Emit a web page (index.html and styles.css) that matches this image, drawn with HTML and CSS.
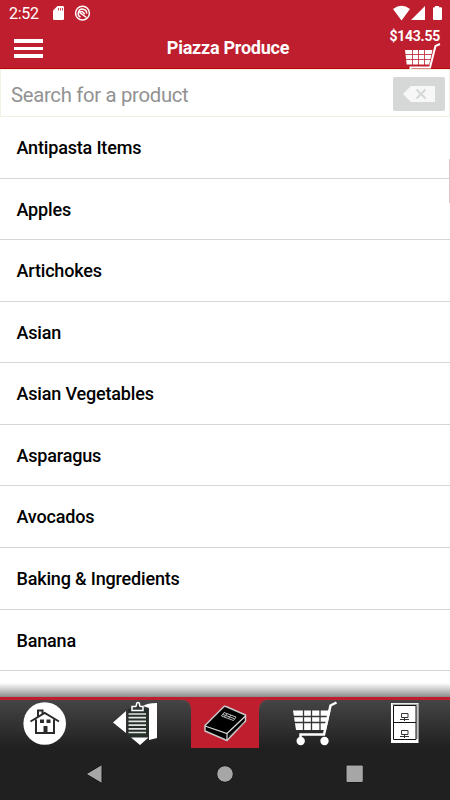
FILE: index.html
```html
<!DOCTYPE html>
<html lang="en">
<head>
<meta charset="utf-8">
<title>Piazza Produce</title>
<link rel="stylesheet" href="styles.css">
</head>
<body>
<div class="app">
  <header class="header">
    <div class="status">
      <span class="clock">2:52</span>
      <svg class="status-left" width="40" height="27" viewBox="52 0 40 27">
        <path fill="#fff" d="M57.500 6h5.200q1.300 0 1.300 1.300v11.400q0 1.300-1.300 1.300h-8.400q-1.300 0-1.300-1.300V10.500z"/>
        <path stroke="#be1e2d" stroke-width=".8" d="M58.500 8v2.500M60.500 8v2.500M62.500 8v2.500"/>
        <circle cx="82.500" cy="13.200" r="6.900" fill="none" stroke="#fff" stroke-width="1.500"/>
        <path fill="none" stroke="#fff" stroke-width="1.500" d="M80.500 17a4.200 4.200 0 1 1 6.200-3.500M79.500 12.500l7 5M79.500 12l2.800-.5 2.500 2.800"/>
      </svg>
      <svg class="status-right" width="60" height="27" viewBox="390 0 60 27">
        <path fill="#fff" d="M393 9q8.500-6.500 17 0l-8.500 11.500zM425 6v14h-14zM435 7.300V6h4v1.300h2q1 0 1 1V19q0 1-1 1h-7q-1 0-1-1V8.300q0-1 1-1z"/>
      </svg>
    </div>
    <div class="titlebar">
      <div class="menu"><i></i><i></i><i></i></div>
      <h1>Piazza Produce</h1>
      <div class="cart">
        <span>$143.55</span>
        <svg width="40" height="27" viewBox="402 42 40 27">
          <path fill="#fff" d="M405 50h27.500l-3.300 14.500h-22.500z"/>
          <path fill="none" stroke="#be1e2d" stroke-width=".8" d="M405 54.500h28M405 59.500h27M412.500 49v16M418.500 49v16M424.500 49v16"/>
          <path fill="none" stroke="#fff" stroke-width="2" d="M440 44l-4.500 2-5.500 21.500h-19.500v2"/>
        </svg>
      </div>
    </div>
  </header>
  <div class="search">
    <span>Search for a product</span>
    <button class="clear" aria-label="Clear"><svg width="32" height="16" viewBox="0 0 32 16"><path fill="#f7f7f7" d="M0 8l8-8h24v16H8z"/><path stroke="#d5d8d7" stroke-width="2" d="M13.500 3.500l9 9M22.500 3.500l-9 9"/></svg></button>
  </div>
  <main class="list">
    <div class="row">Antipasta Items</div>
    <div class="row">Apples</div>
    <div class="row">Artichokes</div>
    <div class="row">Asian</div>
    <div class="row">Asian Vegetables</div>
    <div class="row">Asparagus</div>
    <div class="row">Avocados</div>
    <div class="row">Baking &amp; Ingredients</div>
    <div class="row">Banana</div>
    <div class="scrollbar"></div>
    <div class="shade"></div>
  </main>
  <nav class="tabs">
    <svg viewBox="0 700 90 48">
      <circle cx="44.700" cy="723.500" r="21.300" fill="#fff"/>
      <path fill="none" stroke="#2b2b2b" stroke-width="2" d="M30.500 721.500L44.700 713l14.300 8.500M38 716.500V710.500h4.500v4M36 719.500V733h18V719.500"/>
      <path fill="#2b2b2b" d="M40 719.500h4v3.500h-4zM46.500 719.500h4v3.500h-4zM43.500 726h4v7h-4z"/>
    </svg>
    <svg viewBox="90 700 90 48">
      <path fill="#fff" d="M113 722.500L126 711v22zM131 737.500h17.500l-8.500 7.500zM143 706q4-3 14-3v35l-8 2V708z"/>
      <path fill="#263029" d="M127.500 708.500H148.500V737h-21z"/>
      <path fill="none" stroke="#e4e4e4" stroke-width="1.700" d="M128.500 714h17.500M128.500 717.700h17.500M128.500 721.400h17.500M128.500 725.100h17.500M128.500 728.800h17.500M128.500 732.500h17.500"/>
      <path fill="#353535" stroke="#fff" stroke-width="1.500" d="M132 710.500V706.500h3.500q1-.5 1-2 0-2 1.500-2t1.500 2q0 1.500 1 2h2.500v4z"/>
    </svg>
    <svg viewBox="180 700 90 48" class="active">
      <path fill="#be1e2d" d="M181 699h88q-10 1-10 10v39h-68v-39q0-9-10-10z"/>
      <path fill="none" stroke="#854047" stroke-width=".7" d="M181 699.500q10 1 10 10M269 699.500q-10 1-10 10"/>
      <path fill="#000" stroke="#c8c8c8" stroke-width="1.500" stroke-linejoin="round" d="M224 706.500q1-.5 2 0l19.500 8.500v6L227 740.500 205 731v-5.500z"/>
      <path fill="none" stroke="#ddd" stroke-width="1.200" d="M205 726l22 7.500 18.500-17.500M227 733.500v6.500"/>
      <path fill="none" stroke="#777" stroke-width=".8" d="M229 736.500l15-14"/>
      <path fill="none" stroke="#bbb" stroke-width="1" d="M224 712.500l12 4.500-2.500 3.500-12-4.500zM223 714.500l11.500 4.200M227 713.500l-2.500 3.500M231 715l-2.500 3.500"/>
    </svg>
    <svg viewBox="270 700 90 48">
      <path fill="#fff" d="M293 710.500h37.500L326 730h-30z"/>
      <path fill="none" stroke="#353535" stroke-width="1.300" d="M293 716.500h38M293 722.500h36M303.500 710v20M311.500 710v20M320 710v20"/>
      <path fill="none" stroke="#fff" stroke-width="2.500" d="M336.500 702.500l-6 3-6.500 29h-23.500v5"/>
      <circle cx="300.700" cy="741" r="4.200" fill="#fff"/><circle cx="324.500" cy="741" r="4.200" fill="#fff"/>
    </svg>
    <svg viewBox="360 700 90 48">
      <path fill="#fff" d="M391 703h27.500v40H391z"/>
      <path fill="none" stroke="#aaa" stroke-width="1.500" d="M392.500 704.500h24.500V739"/>
      <path fill="#fff" stroke="#111" d="M393.500 705.500h22.500V739.500h-22.500zM393.500 722.500H416"/>
      <path fill="none" stroke="#333" stroke-width="1" d="M401.500 713.500h6.500v4h-6.500zM400 719.500h9M404.500 718v3M401.500 730.500h6.500v4h-6.500zM400 736.500h9M404.500 735v3"/>
    </svg>
  </nav>
  <footer class="system">
    <svg viewBox="0 748 450 52">
      <g fill="#a6a6a6" stroke="#141414" stroke-width="1">
        <path stroke-linejoin="round" d="M86 774l16-9.500v19z"/>
        <circle cx="225" cy="774" r="8.300"/>
        <rect x="346" y="765" width="17.300" height="17.500" rx="1.500"/>
      </g>
    </svg>
  </footer>
</div>
</body>
</html>
```
FILE: styles.css
```css
* { box-sizing: border-box; }
body { margin: 0; font-family: Roboto, sans-serif; background: #fff; }
svg { display: block; }
.app { width: 450px; height: 800px; display: flex; flex-direction: column; overflow: hidden; }
.header { height: 69px; background: #be1e2d; color: #fff; border-bottom: 1px solid #b90808; flex: none; }
.status { height: 27px; display: flex; align-items: center; padding-left: 9px; }
.clock { width: 43px; font-size: 16px; line-height: 27px; letter-spacing: -.3px; }
.status-right { margin-left: auto; }
.titlebar { height: 41px; display: grid; grid-template-columns: 90px 1fr 90px; padding-right: 9px; }
.menu { padding: 12px 0 0 14px; display: flex; flex-direction: column; gap: 4px; }
.menu i { width: 29px; height: 3.700px; background: #fff; }
h1 { margin: 0; padding-left: 15px; font-size: 18px; font-weight: 700; line-height: 42px; text-align: center; letter-spacing: -.25px; white-space: nowrap; }
.cart { display: flex; flex-direction: column; align-items: flex-end; }
.cart span { font-size: 14px; font-weight: 700; line-height: 16px; margin-top: 1px; margin-right: 1px; letter-spacing: -.25px; }
.cart svg { margin-top: -2px; margin-right: -1px; }
.search { height: 48px; flex: none; border: 1px solid #f1f0e2; display: flex; align-items: center; justify-content: space-between; padding: 3px 4px 1px 10px; font-size: 20.300px; letter-spacing: -.3px; color: #929292; }
.search span { padding-top: 1px; }
.clear { width: 52px; height: 34px; padding: 0; border: 0; border-radius: 2px; background: #d5d8d7; display: grid; place-items: center; }
.list { height: 580px; flex: none; position: relative; overflow: hidden; }
.row { height: 61.570px; border-bottom: 1px solid #d6d6d6; padding-left: 16.500px; font-size: 18px; font-weight: 500; line-height: 62.500px; letter-spacing: -.17px; color: #000; }
.scrollbar { position: absolute; right: 0; top: 42px; width: 1px; height: 44px; background: #d9c5ca; }
.shade { position: absolute; left: 0; right: 0; bottom: 0; height: 14px; background: linear-gradient(#fff0, #999 90%, #888); }
.tabs { height: 51px; flex: none; display: grid; grid-template-columns: repeat(5, 90px); border-top: 3px solid #be1e2d; background: linear-gradient(#454545, #202020); }
.tabs svg { width: 90px; height: 48px; }
.tabs .active { overflow: visible; }
.system { height: 52px; flex: none; background: #202020; }
```
